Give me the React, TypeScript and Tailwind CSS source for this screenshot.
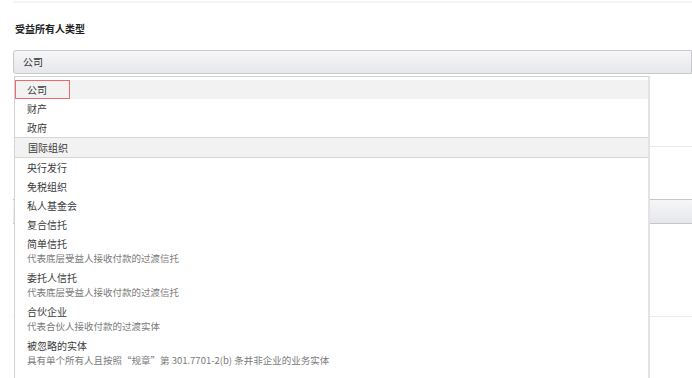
type Option = { label: string; desc?: string; active?: boolean; hover?: boolean };

const options: Option[] = [
  { label: "公司", active: true },
  { label: "财产" },
  { label: "政府" },
  { label: "国际组织", hover: true },
  { label: "央行发行" },
  { label: "免税组织" },
  { label: "私人基金会" },
  { label: "复合信托" },
  { label: "简单信托", desc: "代表底层受益人接收付款的过渡信托" },
  { label: "委托人信托", desc: "代表底层受益人接收付款的过渡信托" },
  { label: "合伙企业", desc: "代表合伙人接收付款的过渡实体" },
  {
    label: "被忽略的实体",
    desc: "具有单个所有人且按照“规章”第 301.7701-2(b) 条并非企业的业务实体",
  },
];

const OptionRow = ({ option }: { option: Option }) => {
  let rowClass = "relative px-[12px] py-[2px]";
  if (option.active) rowClass += " bg-[#f2f2f2]";
  if (option.hover)
    rowClass += " bg-[#f2f2f2] border-y border-[#d6d6d6] py-[1px] -ml-px border-l";
  return (
    <div className={rowClass}>
      {option.active && (
        <span className="absolute left-0 top-0 w-[55px] h-full border border-[#ee6b6b]" />
      )}
      <div className={`text-[10px] leading-[15px] text-[#3a3a3a] ${option.hover ? "pl-px" : ""}`}>
        {option.label}
      </div>
      {option.desc && (
        <div className="text-[9.5px] leading-[15px] text-[#7a7a7a] whitespace-nowrap">
          {option.desc}
        </div>
      )}
    </div>
  );
};

export default function App() {
  return (
    <div className="relative w-[692px] h-[378px] overflow-hidden bg-white font-['Noto_Sans_CJK_SC','Liberation_Sans',sans-serif]">
      <div className="ml-[13px] mt-px h-[2px] bg-[#f3f3f3]" />
      <div className="pl-[15px] pt-[19px] text-[10px] leading-[14px] font-bold text-[#222]">
        受益所有人类型
      </div>
      <div className="ml-[13px] mt-[14px] h-[24px] border border-[#c9cacd] rounded-l-[3px] bg-gradient-to-b from-[#f6f6f8] to-[#e6e7ea] pl-[9px] text-[10px] leading-[22px] text-[#333]">
        公司
      </div>

      {/* form content behind the open menu */}
      <div className="ml-[13px] mt-[72px] h-px bg-[#e8e8e8]" />
      <div className="ml-[13px] mt-[52px] h-[25px] border-y border-[#c4c5c8] bg-gradient-to-b from-[#f6f6f8] to-[#e6e7ea]" />
      <div className="ml-[13px] mt-[92px] h-px bg-[#ececec]" />

      <div className="absolute left-[14px] top-[76px] w-[636px] h-[310px] bg-white border-l border-t border-[#d2d2d2] border-r-2 border-r-[#e3e3e3] pt-[3px]">
        {options.map((option) => (
          <OptionRow key={option.label} option={option} />
        ))}
        <div className="ml-[13px] mr-[14px] mt-[8px] h-[2px] bg-[#c8c8c8]" />
      </div>
    </div>
  );
}
